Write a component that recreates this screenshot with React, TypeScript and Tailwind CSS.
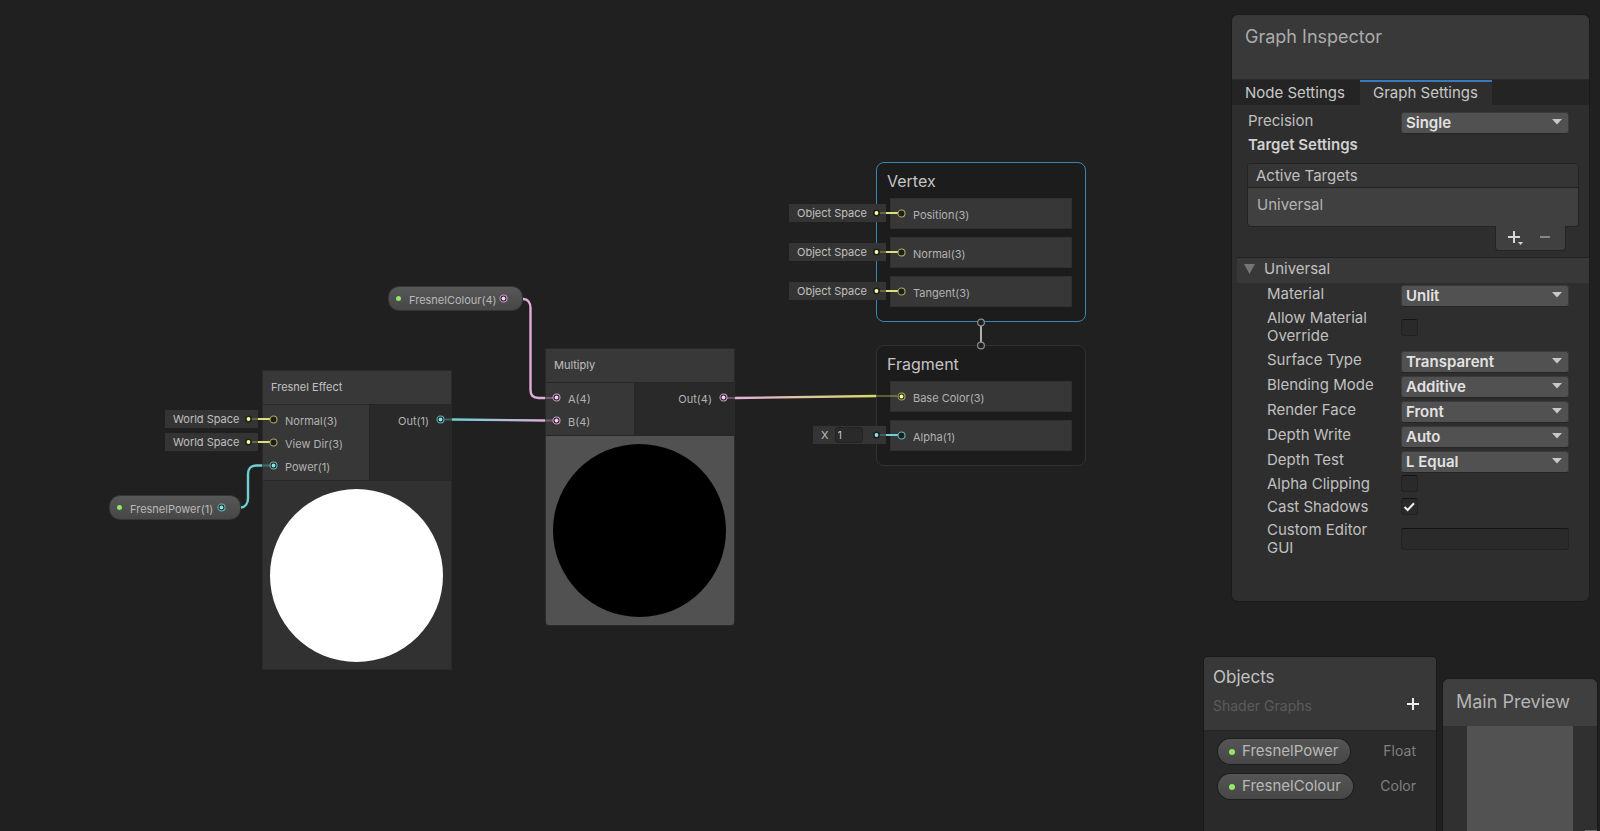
import { useState, type ReactNode } from 'react';

type PortKind = 'yellow' | 'teal' | 'pink';

const PORT_COLORS: Record<PortKind, string> = {
  yellow: '#a9a95b',
  teal: '#62b3b8',
  pink: '#c79cc4',
};

const DOT_COLORS: Record<PortKind, string> = {
  yellow: '#f6ff9a',
  teal: '#84e4e7',
  pink: '#fbcbf4',
};

function Port({ kind, connected = false }: { kind: PortKind; connected?: boolean }) {
  return (
    <svg viewBox="0 0 9 9" className="size-[9px] shrink-0" aria-hidden="true">
      <circle cx="4.5" cy="4.5" r="3.5" fill="#1e1e1e" stroke={PORT_COLORS[kind]} strokeWidth="1.1" />
      {connected && <circle cx="4.5" cy="4.5" r="1.9" fill={DOT_COLORS[kind]} />}
    </svg>
  );
}

/* Default-value tag that sits to the left of an unconnected input port. */
function ValueTag({ kind, children, className }: { kind: PortKind; children: ReactNode; className: string }) {
  const wire = kind === 'yellow' ? '#dcdf7c' : '#6fcfd3';
  return (
    <div
      className={`absolute flex h-[18px] items-center justify-between bg-[#343434] text-[11px] leading-4 text-[#c0c0c0] ${className}`}
    >
      {children}
      <svg viewBox="0 0 30 8" className="absolute -right-[17px] top-[5px] h-2 w-[30px]" aria-hidden="true">
        <path d="M6 4h7" stroke={wire} strokeOpacity="0.35" strokeWidth="1.6" />
        <path d="M13 4h12" stroke={wire} strokeWidth="2" />
        <circle cx="3.5" cy="4" r="3.5" fill="#202020" />
        <circle cx="3.5" cy="4" r="1.9" fill={DOT_COLORS[kind]} />
      </svg>
    </div>
  );
}

function InputRow({ label, kind, connected, children }: { label: string; kind: PortKind; connected?: boolean; children?: ReactNode }) {
  return (
    <div className="relative flex h-[23px] items-center gap-[7px] pl-[6px]">
      {children}
      <span className="relative flex">
        <Port kind={kind} connected={connected} />
      </span>
      <span className="pt-[3px]">{label}</span>
    </div>
  );
}

function BlockRow({ label, kind, connected, children }: { label: string; kind: PortKind; connected?: boolean; children?: ReactNode }) {
  return (
    <div className="relative flex h-[31px] items-center gap-[7px] border border-[#303030] bg-[#373737] pl-[6px]">
      {children}
      <span className="relative flex">
        <Port kind={kind} connected={connected} />
      </span>
      <span className="pt-[3px] text-[11px] leading-4 text-[#b2b2b2]">{label}</span>
    </div>
  );
}

function PropertyPill({ label, kind, className }: { label: string; kind: PortKind; className: string }) {
  return (
    <div
      className={`absolute flex h-[25px] items-center rounded-[11px] border border-[#353535] bg-linear-to-b from-[#575757] to-[#474747] pl-[7px] text-[11px] leading-4 text-[#b8b8b8] ${className}`}
    >
      <span className="size-[5px] rounded-full bg-[#8fe866]" />
      <span className="flex-1 pl-2 pt-[3px]">{label}</span>
      <Port kind={kind} connected />
    </div>
  );
}

function Wires() {
  return (
    <svg viewBox="0 0 1100 700" className="absolute left-0 top-0 h-[700px] w-[1100px]" fill="none" aria-hidden="true">
      <defs>
        <linearGradient id="tealPink" gradientUnits="userSpaceOnUse" x1="452" y1="0" x2="545" y2="0">
          <stop offset="0" stopColor="#6fcfd3" />
          <stop offset="1" stopColor="#e0acda" />
        </linearGradient>
        <linearGradient id="pinkYellow" gradientUnits="userSpaceOnUse" x1="735" y1="0" x2="876" y2="0">
          <stop offset="0" stopColor="#e5b0de" />
          <stop offset="1" stopColor="#d7da62" />
        </linearGradient>
      </defs>
      <path d="M523 299c5 0 7.500 4 7.500 9v82c0 5 3 8 8 8h7" stroke="#e0acda" strokeWidth="2.400" />
      <path d="M241 507.500c4 0 7-4 7-9V474c0-5 3-8.500 8-8.500h7" stroke="#6fcfd3" strokeWidth="2.400" />
      <path d="M452 419.500L545 420.500" stroke="url(#tealPink)" strokeWidth="2.400" />
      <path d="M735 398L876 396" stroke="url(#pinkYellow)" strokeWidth="2.400" />
    </svg>
  );
}

/* Faded ends of the wires where they run over a node towards its port. */
function WireEnds() {
  return (
    <svg viewBox="0 0 1100 700" className="pointer-events-none absolute left-0 top-0 h-[700px] w-[1100px]" fill="none" strokeWidth="2" strokeOpacity="0.35" aria-hidden="true">
      <path d="M545 398h8M545 420.500h8M727 398h8" stroke="#e0acda" />
      <path d="M262 465.500h8M445 419.500h7" stroke="#6fcfd3" />
      <path d="M876 396h21" stroke="#d7da62" />
    </svg>
  );
}

function GraphCanvas() {
  return (
    <main className="absolute inset-0" aria-label="Shader graph">
      <Wires />

      <PropertyPill label="FresnelColour(4)" kind="pink" className="left-[388px] top-[286px] w-[135px] pr-[14px]" />
      <PropertyPill label="FresnelPower(1)" kind="teal" className="left-[109px] top-[495px] w-[132px] pr-[14px]" />

      <section className="absolute left-[262px] top-[370px] w-[190px] border border-[#2a2a2a] bg-[#272727] text-[11px] leading-4 text-[#b2b2b2]">
        <h2 className="flex h-[33px] items-center bg-[#383838] pb-[2px] pl-2 text-[#c0c0c0]">Fresnel Effect</h2>
        <div className="mt-px flex gap-px">
          <div className="h-[75px] w-[106px] bg-[#373737] pt-[3px]">
            <InputRow label="Normal(3)" kind="yellow">
              <ValueTag kind="yellow" className="-left-[98px] top-[2px] w-[93px] pl-2">World Space</ValueTag>
            </InputRow>
            <InputRow label="View Dir(3)" kind="yellow">
              <ValueTag kind="yellow" className="-left-[98px] top-[2px] w-[93px] pl-2">World Space</ValueTag>
            </InputRow>
            <InputRow label="Power(1)" kind="teal" connected />
          </div>
          <div className="flex-1 bg-[#292929] pr-[6px] pt-[3px]">
            <div className="flex h-[23px] items-center justify-end gap-[7px]">
              <span className="pt-[3px]">Out(1)</span>
              <Port kind="teal" connected />
            </div>
          </div>
        </div>
        <div className="mt-px flex h-[188px] items-center bg-[#313131] pl-[7px]">
          <div className="size-[173px] rounded-full bg-white" />
        </div>
      </section>

      <section className="absolute left-[545px] top-[348px] w-[190px] overflow-hidden rounded-b border border-[#2a2a2a] bg-[#272727] text-[11px] leading-4 text-[#b2b2b2]">
        <h2 className="flex h-[33px] items-center bg-[#383838] pb-[2px] pl-2 text-[#c0c0c0]">Multiply</h2>
        <div className="mt-px flex gap-px">
          <div className="h-[52px] w-[88px] bg-[#373737] pt-[3px]">
            <InputRow label="A(4)" kind="pink" connected />
            <InputRow label="B(4)" kind="pink" connected />
          </div>
          <div className="flex-1 bg-[#292929] pr-[6px] pt-[3px]">
            <div className="flex h-[23px] items-center justify-end gap-[7px]">
              <span className="pt-[3px]">Out(4)</span>
              <Port kind="pink" connected />
            </div>
          </div>
        </div>
        <div className="mt-px flex h-[189px] items-center bg-[#515151] pl-[7px]">
          <div className="size-[173px] rounded-full bg-black" />
        </div>
      </section>

      <section className="absolute left-[876px] top-[162px] w-[210px] rounded-lg border border-[#3787b4] bg-[#1c1c1c] px-[13px] pb-[14px]">
        <h2 className="-ml-[3px] flex h-[35px] items-center pt-px text-[16px] leading-5 text-[#c4c4c4]">Vertex</h2>
        <div className="flex flex-col gap-2">
          {['Position(3)', 'Normal(3)', 'Tangent(3)'].map((label) => (
            <BlockRow key={label} label={label} kind="yellow">
              <ValueTag kind="yellow" className="-left-[102px] top-[5px] w-[97px] pl-2">Object Space</ValueTag>
            </BlockRow>
          ))}
        </div>
      </section>

      <section className="absolute left-[876px] top-[345px] w-[210px] rounded-lg border border-[#303030] bg-[#1c1c1c] px-[13px] pb-[14px]">
        <h2 className="-ml-[3px] flex h-[35px] items-center pt-px text-[16px] leading-5 text-[#c4c4c4]">Fragment</h2>
        <div className="flex flex-col gap-2">
          <BlockRow label="Base Color(3)" kind="yellow" connected />
          <BlockRow label="Alpha(1)" kind="teal">
            <ValueTag kind="teal" className="-left-[78px] top-[5px] w-[73px] pl-2">
              <label className="flex items-center gap-[6px]">
                X
                <input
                  defaultValue="1"
                  className="h-4 w-7 rounded-[3px] border border-[#222222] bg-[#2a2a2a] pl-[2px] text-[11px] text-[#c4c4c4]"
                />
              </label>
            </ValueTag>
          </BlockRow>
        </div>
      </section>

      <svg viewBox="0 0 10 34" className="absolute left-[976px] top-[317px] h-[34px] w-[10px]" aria-hidden="true">
        <path d="M5 9v16" stroke="#b0b0b0" strokeWidth="2" />
        <circle cx="5" cy="5.500" r="3.400" fill="#1e1e1e" stroke="#8c8c8c" strokeWidth="1.200" />
        <circle cx="5" cy="28.500" r="3.400" fill="#1e1e1e" stroke="#8c8c8c" strokeWidth="1.200" />
      </svg>

      <WireEnds />
    </main>
  );
}

function Dropdown({ id, value, options }: { id: string; value: string; options: string[] }) {
  return (
    <div className="relative flex-1">
      <select
        id={id}
        defaultValue={value}
        className="block h-[22px] w-full appearance-none rounded-[3px] border border-[#3a3a3a] border-b-[#262626] bg-[#515151] pl-1 text-[15px] font-semibold leading-5 text-[#e2e2e2]"
      >
        {options.map((o) => (
          <option key={o}>{o}</option>
        ))}
      </select>
      <svg viewBox="0 0 10 6" className="pointer-events-none absolute right-[7px] top-[7px] h-[6px] w-[10px]" aria-hidden="true">
        <path d="M0 0h10L5 5.500z" fill="#c8c8c8" />
      </svg>
    </div>
  );
}

function Tick({ id, checked = false }: { id: string; checked?: boolean }) {
  const [on, setOn] = useState(checked);
  return (
    <span className="relative flex size-[17px]">
      <input
        id={id}
        type="checkbox"
        checked={on}
        onChange={(e) => setOn(e.target.checked)}
        className="size-[17px] appearance-none rounded-[3px] border border-[#222222] border-t-[#131313] bg-[#2a2a2a]"
      />
      {on && (
        <svg viewBox="0 0 17 17" className="pointer-events-none absolute inset-0" fill="none" aria-hidden="true">
          <path d="M3.500 9l3.200 3 6.300-6.800" stroke="#f0f0f0" strokeWidth="2" />
        </svg>
      )}
    </span>
  );
}

function Field({ id, label, className, children }: { id: string; label: string; className: string; children: ReactNode }) {
  return (
    <div className={`flex ${className}`}>
      <label htmlFor={id} className="w-[134px] shrink-0 pr-5 leading-[18px]">{label}</label>
      {children}
    </div>
  );
}

function GraphInspector() {
  return (
    <aside className="absolute right-[11px] top-[15px] w-[357px] overflow-hidden rounded-md bg-[#2e2e2e] text-[15px] leading-[18px] text-[#c0c0c0] shadow-[0_0_0_1px_#1a1a1a]">
      <h1 className="h-[65px] border-b border-[#2a2a2a] bg-[#393939] pl-[13px] pt-[10px] text-[18px] leading-6 text-[#acacac]">Graph Inspector</h1>
      <div className="flex h-[25px] bg-[#242424]" role="tablist">
        <button role="tab" aria-selected="false" className="w-32 border-t-2 border-transparent pb-[2px] pl-[13px] text-left text-[#c8c8c8]">Node Settings</button>
        <button role="tab" aria-selected="true" className="w-[132px] border-t-2 border-[#3a79bb] bg-[#2e2e2e] pb-[2px] pl-[13px] text-left text-[#c8c8c8]">Graph Settings</button>
      </div>
      <div className="pb-[44px]">
        <div className="flex pl-4 pr-5 pt-[7px]">
          <label htmlFor="precision" className="w-[153px]">Precision</label>
          <Dropdown id="precision" value="Single" options={['Single', 'Half']} />
        </div>
        <h2 className="pl-4 pt-[2px] font-semibold text-[#d2d2d2]">Target Settings</h2>
        <div className="ml-[15px] mr-[10px] mt-[9px] rounded border border-[#232323] bg-[#404040]">
          <h3 className="h-6 rounded-t border-b border-[#232323] bg-[#353535] pl-2 pt-[3px]">Active Targets</h3>
          <p className="h-[38px] pl-[9px] pt-2 text-[#b4b4b4]">Universal</p>
        </div>
        <div className="-mt-px ml-auto mr-[23px] flex h-[25px] w-[71px] items-center gap-[17px] rounded-b border border-t-0 border-[#232323] bg-[#404040] pl-[11px]">
          <button aria-label="Add target">
            <svg viewBox="0 0 16 16" className="size-4" aria-hidden="true">
              <path d="M7 1v12M1 7h12" stroke="#d8d8d8" strokeWidth="2" />
              <path d="M11 12h5l-2.500 3z" fill="#d8d8d8" />
            </svg>
          </button>
          <button aria-label="Remove target">
            <svg viewBox="0 0 10 16" className="h-4 w-[10px]" aria-hidden="true">
              <path d="M0 7h10" stroke="#858585" strokeWidth="2" />
            </svg>
          </button>
        </div>
        <div className="ml-[5px] mt-[6px] flex h-[26px] items-center border-t border-[#232323] bg-[#383838] pb-[3px] pl-[7px]">
          <svg viewBox="0 0 11 10" className="h-[10px] w-[11px]" aria-hidden="true">
            <path d="M0 0h11L5.500 10z" fill="#757575" />
          </svg>
          <h3 className="pl-[9px]">Universal</h3>
        </div>
        <div className="flex flex-col pl-[35px] pr-5 pt-[2px]">
          <Field id="material" label="Material" className="h-6">
            <Dropdown id="material" value="Unlit" options={['Unlit', 'Lit']} />
          </Field>
          <Field id="override" label="Allow Material Override" className="mb-[6px] h-9 items-center">
            <Tick id="override" />
          </Field>
          <Field id="surface" label="Surface Type" className="h-[25px]">
            <Dropdown id="surface" value="Transparent" options={['Transparent', 'Opaque']} />
          </Field>
          <Field id="blending" label="Blending Mode" className="h-[25px]">
            <Dropdown id="blending" value="Additive" options={['Additive', 'Alpha', 'Multiply']} />
          </Field>
          <Field id="face" label="Render Face" className="h-[25px]">
            <Dropdown id="face" value="Front" options={['Front', 'Back', 'Both']} />
          </Field>
          <Field id="write" label="Depth Write" className="h-[25px]">
            <Dropdown id="write" value="Auto" options={['Auto', 'Force Enabled']} />
          </Field>
          <Field id="test" label="Depth Test" className="h-6">
            <Dropdown id="test" value="L Equal" options={['L Equal', 'Always']} />
          </Field>
          <Field id="clipping" label="Alpha Clipping" className="h-[23px]">
            <Tick id="clipping" />
          </Field>
          <Field id="shadows" label="Cast Shadows" className="h-[23px]">
            <Tick id="shadows" checked />
          </Field>
          <Field id="editor" label="Custom Editor GUI" className="h-9 items-center">
            <input id="editor" className="h-[22px] min-w-0 flex-1 rounded-[3px] border border-[#222222] border-t-[#131313] bg-[#2a2a2a] px-1" />
          </Field>
        </div>
      </div>
    </aside>
  );
}

function BlackboardItem({ name, type }: { name: string; type: string }) {
  return (
    <li className="flex items-center justify-between pl-[14px] pr-5">
      <span className="flex h-[25px] items-center gap-[7px] rounded-full bg-linear-to-b from-[#555555] to-[#474747] pl-[11px] pr-3 text-[15px] leading-5 text-[#b8b8b8] shadow-[0_0_0_1px_#1e1e1e]">
        <span className="size-[6px] rounded-full bg-[#8fe866]" />
        <span className="pb-[2px]">{name}</span>
      </span>
      <span className="pb-[2px] text-[14px] leading-5 text-[#808080]">{type}</span>
    </li>
  );
}

function BottomPanels() {
  return (
    <div className="absolute bottom-0 right-[3px] flex items-end gap-[7px]">
      <aside className="h-[174px] w-[232px] overflow-hidden rounded-t bg-[#2a2a2a] shadow-[0_0_0_1px_#1a1a1a]">
        <header className="h-[74px] border-b border-[#242424] bg-[#383838] pl-[9px] pr-4 pt-2">
          <h2 className="text-[17px] leading-6 text-[#c2c2c2]">Objects</h2>
          <div className="flex items-center justify-between pt-[7px]">
            <p className="text-[14px] leading-5 text-[#5b5b5b]">Shader Graphs</p>
            <button aria-label="Add property" className="mb-1">
              <svg viewBox="0 0 14 14" className="size-[14px]" aria-hidden="true">
                <path d="M7 1v12M1 7h12" stroke="#ececec" strokeWidth="2" />
              </svg>
            </button>
          </div>
        </header>
        <ul className="flex flex-col gap-[10px] pt-2">
          <BlackboardItem name="FresnelPower" type="Float" />
          <BlackboardItem name="FresnelColour" type="Color" />
        </ul>
      </aside>
      <aside className="relative flex h-[152px] w-[154px] flex-col overflow-hidden rounded-t-md bg-[#303030] shadow-[0_0_0_1px_#1a1a1a]">
        <h2 className="h-[47px] bg-[#3f3f3f] pl-[13px] pt-[11px] text-[18px] leading-6 text-[#b4b4b4]">Main Preview</h2>
        <div className="mx-6 flex-1 bg-[#525252]" />
        <span className="absolute bottom-0 right-0 h-px w-3 bg-[#6a6a6a]" />
      </aside>
    </div>
  );
}

export default function App() {
  return (
    <div className="relative min-h-screen overflow-hidden bg-[#202020] font-['Inter','Liberation_Sans',sans-serif]">
      <GraphCanvas />
      <GraphInspector />
      <BottomPanels />
    </div>
  );
}
